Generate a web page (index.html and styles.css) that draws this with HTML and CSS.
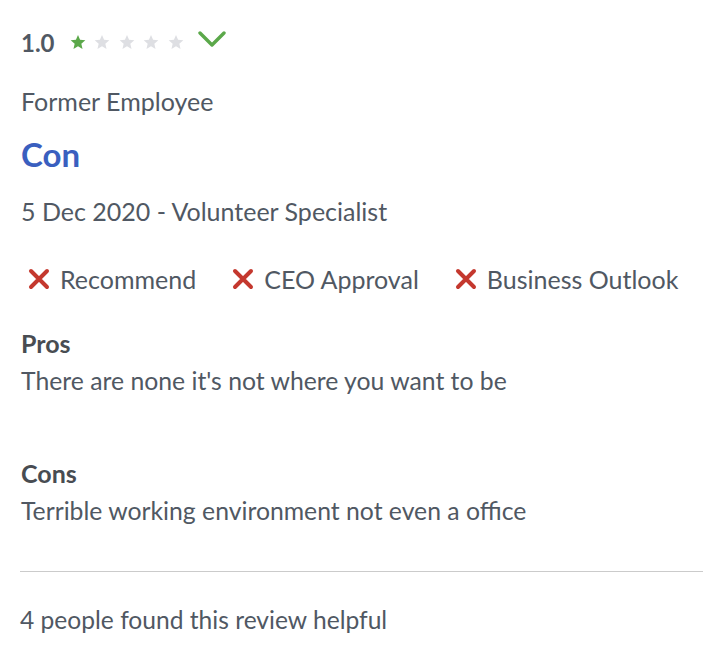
FILE: index.html
```html
<!DOCTYPE html>
<html>
<head>
<meta charset="utf-8">
<link rel="stylesheet" href="styles.css">
</head>
<body>
<div class="review">
  <div class="rating">
    <span class="score">1.0</span>
    <span class="stars">
      <svg class="star on" viewBox="0 0 24 24"><path d="M12 1.5l3.1 7.3 7.9.7-6 5.2 1.8 7.8L12 18.4 5.2 22.5 7 14.7 1 9.5l7.9-.7z"/></svg>
      <svg class="star" viewBox="0 0 24 24"><path d="M12 1.5l3.1 7.3 7.9.7-6 5.2 1.8 7.8L12 18.4 5.2 22.5 7 14.7 1 9.5l7.9-.7z"/></svg>
      <svg class="star" viewBox="0 0 24 24"><path d="M12 1.5l3.1 7.3 7.9.7-6 5.2 1.8 7.8L12 18.4 5.2 22.5 7 14.7 1 9.5l7.9-.7z"/></svg>
      <svg class="star" viewBox="0 0 24 24"><path d="M12 1.5l3.1 7.3 7.9.7-6 5.2 1.8 7.8L12 18.4 5.2 22.5 7 14.7 1 9.5l7.9-.7z"/></svg>
      <svg class="star" viewBox="0 0 24 24"><path d="M12 1.5l3.1 7.3 7.9.7-6 5.2 1.8 7.8L12 18.4 5.2 22.5 7 14.7 1 9.5l7.9-.7z"/></svg>
    </span>
    <svg class="chev" viewBox="0 0 28 16"><path d="M2 2l12 12L26 2" /></svg>
  </div>
  <div class="status">Former Employee</div>
  <h2 class="title">Con</h2>
  <div class="meta">5 Dec 2020 - Volunteer Specialist</div>
  <div class="flags">
    <span class="flag"><svg class="x" viewBox="0 0 22 22"><path d="M3 3l16 16M19 3L3 19"/></svg>Recommend</span>
    <span class="flag"><svg class="x" viewBox="0 0 22 22"><path d="M3 3l16 16M19 3L3 19"/></svg>CEO Approval</span>
    <span class="flag"><svg class="x" viewBox="0 0 22 22"><path d="M3 3l16 16M19 3L3 19"/></svg>Business Outlook</span>
  </div>
  <div class="section">
    <div class="label">Pros</div>
    <p class="text">There are none it's not where you want to be</p>
  </div>
  <div class="section cons">
    <div class="label">Cons</div>
    <p class="text">Terrible working environment not even a office</p>
  </div>
  <div class="footer">4 people found this review helpful</div>
</div>
</body>
</html>
```
FILE: styles.css
```css
* { box-sizing: border-box; }
body {
  margin: 0;
  background: #fff;
  font-family: Lato, "Open Sans", sans-serif;
  color: #505863;
}
.review {
  padding: 27px 0 0 20px;
}
.rating {
  display: flex;
  align-items: center;
  height: 30px;
}
.score {
  font-size: 24px;
  font-weight: 700;
  margin-left: 1px;
  color: #505863;
}
.stars {
  display: flex;
  gap: 8.5px;
  margin-left: 15px;
}
.star {
  width: 16px;
  height: 16px;
  fill: #dedfe3;
}
.star.on { fill: #5ba84a; }
.chev {
  width: 28px;
  height: 16px;
  margin-left: 14px;
  margin-top: -6px;
  fill: none;
  stroke: #5ba84a;
  stroke-width: 3.4;
  stroke-linecap: round;
  stroke-linejoin: round;
}
.status {
  font-size: 25px;
  margin-top: 29px;
  margin-left: 1px;
  line-height: 30px;
}
.title {
  margin: 20px 0 0 1px;
  font-size: 33px;
  line-height: 36px;
  font-weight: 700;
  color: #3a5fbf;
}
.meta {
  font-size: 25px;
  line-height: 30px;
  margin-top: 24px;
  margin-left: 1px;
}
.flags {
  display: flex;
  gap: 36px;
  margin-top: 38px;
  margin-left: 8px;
  font-size: 25px;
  line-height: 30px;
}
.flag {
  display: flex;
  align-items: center;
}
.x {
  width: 22px;
  height: 22px;
  margin-right: 10px;
  fill: none;
  stroke: #c4382e;
  stroke-width: 4;
  stroke-linecap: round;
}
.section { margin-top: 34px; margin-left: 1px; }
.section.cons { margin-top: 62px; }
.label {
  font-size: 25px;
  font-weight: 700;
  line-height: 30px;
  color: #484c52;
}
.text {
  margin: 8px 0 0;
  font-size: 24.75px;
  line-height: 30px;
}
.footer {
  margin-top: 45px;
  border-top: 1px solid #cbcbcb;
  padding-top: 33px;
  font-size: 24.6px;
  line-height: 30px;
}
```
